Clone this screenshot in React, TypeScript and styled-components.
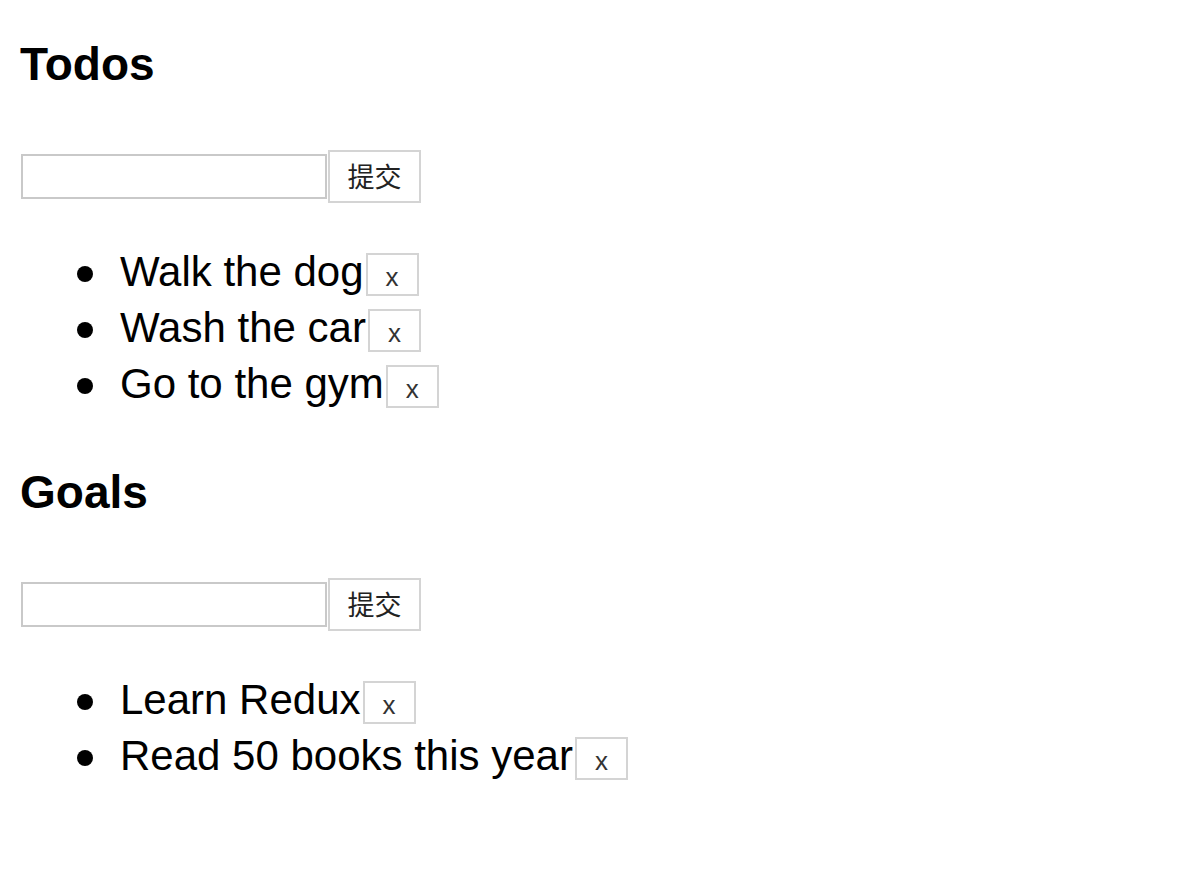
import React from "react";
import styled, { createGlobalStyle } from "styled-components";

const GlobalStyle = createGlobalStyle`
  html, body {
    margin: 0;
    padding: 0;
    background: #ffffff;
  }
  body {
    font-family: "Liberation Sans", Arial, "Noto Sans CJK SC", sans-serif;
    color: #000000;
  }
`;

const Page = styled.div`
  display: flex;
  flex-direction: column;
  gap: 54px;
  padding: 38px 20px 40px 20px;
`;

const Section = styled.section`
  display: flex;
  flex-direction: column;
`;

const Title = styled.h2`
  margin: 0;
  font-family: "Liberation Sans", Arial, sans-serif;
  font-size: 46px;
  font-weight: 700;
  line-height: 52px;
  height: 52px;
`;

const Form = styled.form`
  display: flex;
  align-items: center;
  gap: 1px;
  margin: 60px 0 0 1px;
  height: 53px;
`;

const TextInput = styled.input`
  box-sizing: border-box;
  width: 306px;
  height: 45px;
  margin: 0;
  padding: 0 8px;
  border: 2px solid #c9c9c9;
  border-radius: 0;
  background: #ffffff;
  font-family: "Liberation Sans", Arial, sans-serif;
  font-size: 26px;
  outline: none;
`;

const SubmitButton = styled.button`
  box-sizing: border-box;
  width: 93px;
  height: 53px;
  margin: 0;
  padding: 0 0 2px 0;
  border: 2px solid #d4d4d4;
  border-radius: 0;
  background: #ffffff;
  color: #222222;
  font-family: "Noto Sans CJK SC", "Liberation Sans", sans-serif;
  font-size: 27px;
  line-height: 1;
  cursor: pointer;
`;

const List = styled.ul`
  list-style: none;
  margin: 41px 0 0 0;
  padding: 0 0 0 100px;
`;

const Item = styled.li`
  position: relative;
  height: 56px;
  font-family: "Liberation Sans", Arial, sans-serif;
  font-size: 42px;
  line-height: 56px;
  white-space: nowrap;

  &::before {
    content: "";
    position: absolute;
    left: -43px;
    top: 22px;
    width: 16px;
    height: 16px;
    border-radius: 50%;
    background: #000000;
  }
`;

const RemoveButton = styled.button`
  display: inline-block;
  box-sizing: border-box;
  width: 53px;
  height: 43px;
  margin: 0 0 0 2px;
  padding: 6px 0 0 0;
  vertical-align: baseline;
  border: 2px solid #d4d4d4;
  border-radius: 0;
  background: #ffffff;
  color: #333333;
  font-family: "Liberation Sans", Arial, sans-serif;
  font-size: 26px;
  line-height: 26px;
  cursor: pointer;
`;

type ListSectionProps = {
  title: string;
  items: string[];
};

const ListSection: React.FC<ListSectionProps> = ({ title, items }) => (
  <Section>
    <Title>{title}</Title>
    <Form onSubmit={(e) => e.preventDefault()}>
      <TextInput type="text" />
      <SubmitButton type="submit">提交</SubmitButton>
    </Form>
    <List>
      {items.map((item) => (
        <Item key={item}>
          {item}
          <RemoveButton type="button">x</RemoveButton>
        </Item>
      ))}
    </List>
  </Section>
);

export default function App() {
  return (
    <>
      <GlobalStyle />
      <Page>
        <ListSection
          title="Todos"
          items={["Walk the dog", "Wash the car", "Go to the gym"]}
        />
        <ListSection
          title="Goals"
          items={["Learn Redux", "Read 50 books this year"]}
        />
      </Page>
    </>
  );
}
